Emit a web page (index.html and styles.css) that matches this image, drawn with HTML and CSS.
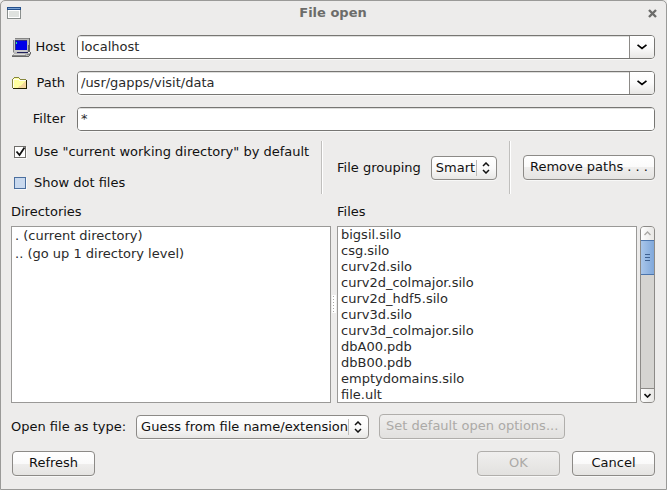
FILE: index.html
```html
<!DOCTYPE html>
<html lang="en">
<head>
    <meta charset="UTF-8">
    <meta name="viewport" content="width=device-width, initial-scale=1.0">
    <title>File open</title>
    <link rel="stylesheet" href="styles.css">
</head>
<body>
    <div class="window">
        <header class="titlebar">
            <svg class="window-icon" width="14" height="12" viewBox="0 0 14 12" shape-rendering="crispEdges">
                <rect width="14" height="12" fill="#8a8f8d"/>
                <rect width="14" height="3" fill="#24508c"/>
                <rect x="1" y="1" width="12" height="1" fill="#7ca3d3"/>
                <rect x="1" y="3" width="12" height="8" fill="#fff"/>
                <rect x="2" y="4" width="10" height="6" fill="#dfe2df"/>
            </svg>
            <h1>File open</h1>
            <button class="close-btn" type="button" aria-label="Close">
                <svg width="9" height="9" viewBox="0 0 9 9">
                    <path d="M1 1l7 7M8 1l-7 7" fill="none" stroke="#6c6c6a" stroke-width="2.4"/>
                </svg>
            </button>
        </header>

        <form class="content">
            <div class="field-row">
                <label for="host">
                    <svg width="20" height="21" viewBox="0 0 20 21" shape-rendering="crispEdges">
                        <path d="M3 1h15v14h-2v1H1V3h2z" fill="#b8b8b8"/>
                        <path d="M3 1h14v1H3zM1 3h1v12H1z" fill="#858585"/>
                        <path d="M17 1h1v14h-2v1h-1v-1h1z" fill="#666"/>
                        <path d="M2 3h13v12H2z" fill="#c8c8c8"/>
                        <path d="M3 4h12v9H3z" fill="#0000e8"/>
                        <path d="M3 3h12v1H3zM3 4h1v9H3z" fill="#303080"/>
                        <path d="M4 5h1v2H4z" fill="#20e8a0"/>
                        <path d="M5 15h11v1H5z" fill="#20205c"/>
                        <path d="M2 16h16v-1h1v2l-2 3H0v-2z" fill="#b4b4b4"/>
                        <path d="M0 18h14v1H0zM15 17h2v1h-2z" fill="#888"/>
                        <path d="M0 19h17v1H0zM17 17h1v2h-1zM18 15h1v2h-1z" fill="#666"/>
                        <path d="M2 17h11v1H2z" fill="#ddd"/>
                    </svg>
                    <span>Host</span>
                </label>
                <div class="combo">
                    <input type="text" id="host" value="localhost">
                    <button type="button" aria-label="Show hosts">
                        <svg width="10" height="6" viewBox="0 0 10 6"><path d="M.5 .8l4.5 3.7 4.5-3.7" fill="none" stroke="#000" stroke-width="1.7"/></svg>
                    </button>
                </div>
            </div>
            <div class="field-row">
                <label for="path">
                    <svg width="16" height="14" viewBox="0 0 16 14" shape-rendering="crispEdges">
                        <path d="M1 2h1V1h5v1h1v1h6v1h1v9H1z" fill="#ffffa0"/>
                        <path d="M14 5v7H5l3-2 3-3z" fill="#f5d99b"/>
                        <path d="M1 3h1v9H1zM2 3h5v1H2zM7 4h7v1H7z" fill="#fffff0"/>
                        <path d="M2 1h5v1H2zM1 2h1v1H1zM7 2h1v1H7zM8 3h6v1H8zM0 3h1v9H0z" fill="#86863c"/>
                        <path d="M1 12h14v1H1zM14 4h1v9h-1z" fill="#222200"/>
                    </svg>
                    <span>Path</span>
                </label>
                <div class="combo">
                    <input type="text" id="path" value="/usr/gapps/visit/data">
                    <button type="button" aria-label="Show recent paths">
                        <svg width="10" height="6" viewBox="0 0 10 6"><path d="M.5 .8l4.5 3.7 4.5-3.7" fill="none" stroke="#000" stroke-width="1.7"/></svg>
                    </button>
                </div>
            </div>
            <div class="field-row">
                <label for="filter"><span>Filter</span></label>
                <div class="combo">
                    <input type="text" id="filter" value="*">
                </div>
            </div>

            <div class="options">
                <div class="checks">
                    <label><input type="checkbox" checked><svg class="tick" width="11" height="11" viewBox="0 0 11 11"><path d="M1.500 5.500l3 3.500L9.500 1.500" fill="none" stroke="#111" stroke-width="1.800"/></svg>Use "current working directory" by default</label>
                    <label><input type="checkbox" class="highlight">Show dot files</label>
                </div>
                <div class="grouping">
                    <label for="grouping">File grouping</label>
                    <div class="select">
                        <select id="grouping">
                            <option>Smart</option>
                            <option>On</option>
                            <option>Off</option>
                        </select>
                        <svg width="8" height="12" viewBox="0 0 8 12"><path d="M1 4l3-3 3 3M1 8l3 3 3-3" fill="none" stroke="#111" stroke-width="1.5"/></svg>
                    </div>
                </div>
                <div class="remove">
                    <button class="btn" type="button">Remove paths . . .</button>
                </div>
            </div>

            <div class="panes">
                <section class="pane">
                    <h2 id="dirs-label">Directories</h2>
                    <ul class="list dirs" aria-labelledby="dirs-label">
                        <li>. (current directory)</li>
                        <li>.. (go up 1 directory level)</li>
                    </ul>
                </section>
                <div class="splitter"></div>
                <section class="pane">
                    <h2 id="files-label">Files</h2>
                    <div class="files">
                        <ul class="list" aria-labelledby="files-label">
                            <li>bigsil.silo</li>
                            <li>csg.silo</li>
                            <li>curv2d.silo</li>
                            <li>curv2d_colmajor.silo</li>
                            <li>curv2d_hdf5.silo</li>
                            <li>curv3d.silo</li>
                            <li>curv3d_colmajor.silo</li>
                            <li>dbA00.pdb</li>
                            <li>dbB00.pdb</li>
                            <li>emptydomains.silo</li>
                            <li>file.ult</li>
                        </ul>
                        <div class="scrollbar">
                            <button type="button" class="up" aria-label="Scroll up" disabled>
                                <svg width="7" height="5" viewBox="0 0 7 5"><path d="M.5 4l3-3 3 3" fill="none" stroke="#aaa8a5" stroke-width="1.400"/></svg>
                            </button>
                            <div class="thumb"><i></i></div>
                            <button type="button" class="down" aria-label="Scroll down">
                                <svg width="7" height="5" viewBox="0 0 7 5"><path d="M.5 1l3 3 3-3" fill="none" stroke="#111" stroke-width="1.600"/></svg>
                            </button>
                        </div>
                    </div>
                </section>
            </div>

            <div class="type-row">
                <label for="type">Open file as type:</label>
                <div class="select">
                    <select id="type">
                        <option>Guess from file name/extension</option>
                    </select>
                    <svg width="8" height="12" viewBox="0 0 8 12"><path d="M1 4l3-3 3 3M1 8l3 3 3-3" fill="none" stroke="#111" stroke-width="1.5"/></svg>
                </div>
                <button class="btn" type="button" disabled>Set default open options...</button>
            </div>

            <div class="actions">
                <button class="btn" type="button">Refresh</button>
                <button class="btn ok" type="submit" disabled>OK</button>
                <button class="btn" type="button">Cancel</button>
            </div>
        </form>
    </div>
</body>
</html>
```
FILE: styles.css
```css
* {
    margin: 0;
    padding: 0;
    box-sizing: border-box;
}

body {
    font-family: "DejaVu Sans", Verdana, sans-serif;
    font-size: 13px;
    line-height: 16px;
    color: #111;
    background: #edeceb;
}

button, input, select {
    font: inherit;
    color: inherit;
}

svg {
    display: block;
    flex: none;
}

.window {
    height: 100vh;
    min-height: 400px;
    display: flex;
    flex-direction: column;
    background: #edeceb;
    border: 1px solid #9a9a98;
    border-radius: 5px 5px 0 0;
}

.titlebar {
    display: grid;
    grid-template-columns: 14px 1fr 14px;
    align-items: center;
    height: 24px;
    padding: 0 7px 0 6px;
}

.titlebar h1 {
    font-size: 13px;
    font-weight: bold;
    text-align: center;
    color: #6c6c6a;
}

.close-btn {
    display: flex;
    justify-content: center;
    background: none;
    border: none;
}

.content {
    flex: 1;
    min-height: 0;
    display: flex;
    flex-direction: column;
    padding: 10px 11px 13px 10px;
}

/* host, path, filter */
.field-row {
    display: flex;
    align-items: center;
    gap: 12px;
    margin-bottom: 12px;
}

.field-row label {
    display: flex;
    align-items: center;
    justify-content: space-between;
    width: 54px;
    height: 24px;
    padding-left: 1px;
}

.field-row label span {
    margin-left: auto;
}

.combo {
    flex: 1;
    display: flex;
    height: 24px;
    background: #fff;
    border: 1px solid #777673;
    border-radius: 4px;
    box-shadow: 0 1px 0 #f8f8f7;
    overflow: hidden;
}

.combo input {
    flex: 1;
    min-width: 0;
    padding: 0 3px;
    border: none;
    outline: none;
    background: linear-gradient(#dededc 1px, #fff 1px);
    color: #2a2a2a;
}

.combo button {
    display: flex;
    align-items: center;
    justify-content: center;
    width: 25px;
    border: none;
    border-left: 1px solid #8c8a87;
    background: linear-gradient(#fff, #fbfbfb 50%, #e8e7e5);
}

/* checkboxes, grouping, remove paths */
.options {
    display: grid;
    grid-template-columns: 310px 1fr auto;
    margin-top: -2px;
}

.checks {
    display: flex;
    flex-direction: column;
    justify-content: space-between;
    height: 53px;
    padding: 3px 0;
}

.checks label {
    position: relative;
    display: flex;
    align-items: center;
    gap: 8px;
    padding-left: 3px;
}

.checks input {
    appearance: none;
    width: 12px;
    height: 12px;
    border: 1px solid #6f6d6a;
    background: #fff;
    box-shadow: 1px 1px 0 #fafafa;
}

.checks .highlight {
    border-color: #4b6f9f;
    background: #c9d9ee;
}

.tick {
    position: absolute;
    left: 4px;
    top: 2px;
    pointer-events: none;
}

.grouping, .remove {
    display: flex;
    align-items: center;
    border-left: 1px solid #c0bfbd;
    box-shadow: inset 1px 0 0 #fff;
}

.grouping {
    gap: 10px;
    padding-left: 15px;
}

.remove {
    padding-left: 13px;
}

.select {
    position: relative;
}

.select select {
    appearance: none;
    display: block;
    height: 24px;
    padding: 0 20px 0 4px;
    border: 1px solid #8c8a87;
    border-radius: 4px;
    background: linear-gradient(#fff, #fafafa 50%, #e8e7e5);
    box-shadow: 0 1px 0 #f8f8f7;
}

.select::after {
    content: "";
    position: absolute;
    right: 20px;
    top: 4px;
    bottom: 4px;
    border-left: 1px solid #bdbbb8;
}

.select svg {
    position: absolute;
    right: 7px;
    top: 6px;
    pointer-events: none;
}

.btn {
    height: 25px;
    min-width: 83px;
    padding: 0 6px 1px;
    border: 1px solid #8c8a87;
    border-radius: 4px;
    background: linear-gradient(#fff, #fafafa 50%, #efeeed 50%, #e5e4e2);
    box-shadow: 0 1px 0 #f8f8f7;
}

.btn:disabled {
    color: #acaaa7;
    border-color: #b0aeab;
    background: linear-gradient(#f0efee, #e2e1df);
}

/* directory and file lists */
.panes {
    flex: 1;
    min-height: 0;
    display: grid;
    grid-template-columns: 320px 6px 1fr;
    grid-template-rows: minmax(0, 1fr);
    margin-top: 10px;
}

.pane {
    display: flex;
    flex-direction: column;
    min-height: 0;
}

.pane h2 {
    margin-bottom: 6px;
    font-size: 13px;
    font-weight: normal;
}

.list {
    flex: 1;
    min-height: 0;
    overflow: hidden;
    list-style: none;
    padding: 0 3px;
    background: #fff;
    border: 1px solid #9a9997;
    color: #2a2a2a;
}

.list.dirs {
    line-height: 18px;
}

.splitter {
    align-self: center;
    justify-self: center;
    width: 4px;
    height: 18px;
    background: radial-gradient(circle, #a9a7a4 1px, #fff 1px) 0 0 / 3px 3px;
}

.files {
    flex: 1;
    min-height: 0;
    display: flex;
    gap: 3px;
}

.scrollbar {
    display: flex;
    flex-direction: column;
    width: 15px;
    border: 1px solid #8c8a87;
    border-radius: 4px;
    background: #d5d4d1;
    overflow: hidden;
}

.scrollbar button {
    display: flex;
    align-items: center;
    justify-content: center;
    height: 13px;
    border: none;
    background: linear-gradient(90deg, #fff, #e8e7e5);
}

.scrollbar .down {
    height: 14px;
    margin-top: auto;
    border-top: 1px solid #8c8a87;
}

.thumb {
    display: flex;
    align-items: center;
    justify-content: center;
    height: 35px;
    margin: 0 -1px;
    border: 1px solid #4b75ad;
    background: linear-gradient(90deg, #a9c6ea, #80a8db);
}

.thumb i {
    width: 5px;
    height: 7px;
    border: solid #3f6191;
    border-width: 1px 0;
    background: linear-gradient(#3f6191, #3f6191) center / 5px 1px no-repeat;
}

.type-row {
    display: flex;
    align-items: center;
    gap: 10px;
    margin-top: 11px;
}

.actions {
    display: flex;
    gap: 12px;
    margin-top: 12px;
    padding-left: 1px;
}

.ok {
    margin-left: auto;
}
```
